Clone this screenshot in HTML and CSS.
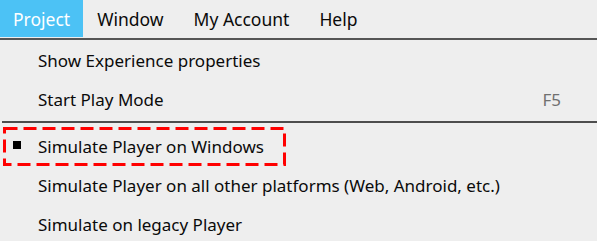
FILE: index.html
```html
<!DOCTYPE html>
<html>
<head>
<meta charset="utf-8">
<link rel="stylesheet" href="styles.css">
</head>
<body>
<nav class="menubar">
  <div class="menubar-item active">Project</div>
  <div class="menubar-item">Window</div>
  <div class="menubar-item">My Account</div>
  <div class="menubar-item">Help</div>
</nav>
<div class="menu">
  <div class="menu-item"><span class="label">Show Experience properties</span></div>
  <div class="menu-item"><span class="label">Start Play Mode</span><span class="shortcut">F5</span></div>
  <div class="separator"></div>
  <div class="menu-item checked">
    <span class="check"></span><span class="label">Simulate Player on Windows</span>
    <svg class="highlight" width="283" height="39" viewBox="0 0 283 39"><rect x="1.5" y="1.5" width="280" height="36" fill="none" stroke="#ff0000" stroke-width="3" stroke-dasharray="13 6"/></svg>
  </div>
  <div class="menu-item"><span class="label">Simulate Player on all other platforms (Web, Android, etc.)</span></div>
  <div class="menu-item"><span class="label">Simulate on legacy Player</span></div>
</div>
</body>
</html>
```
FILE: styles.css
```css
html, body {
  margin: 0;
  padding: 0;
  background: #eeeeee;
}
body {
  font-family: "Noto Sans", "Open Sans", sans-serif;
  font-size: 17px;
  color: #0a0a0a;
  overflow: hidden;
}
.menubar {
  display: flex;
  height: 38px;
  border-bottom: 2px solid #555555;
  font-size: 17.5px;
}
.menubar-item {
  height: 37px;
  line-height: 38px;
  padding: 0 16px 0 14px;
}
.menubar-item.active {
  background: #4cc2f5;
  color: #ffffff;
  padding: 0 13px 0 13px;
}
.menu {
  padding-top: 1px;
}
.menu-item {
  position: relative;
  display: flex;
  align-items: center;
  height: 39px;
  padding: 0 36px 0 38px;
}
.menu-item .label {
  flex: 1;
}
.shortcut {
  color: #707070;
}
.separator {
  height: 2px;
  margin: 2px 0 4px 2px;
  background: #4d4d4d;
}
.check {
  position: absolute;
  left: 13px;
  top: 14px;
  width: 8px;
  height: 8px;
  background: #000000;
}
.highlight {
  position: absolute;
  left: 3px;
  top: 0;
}
```
